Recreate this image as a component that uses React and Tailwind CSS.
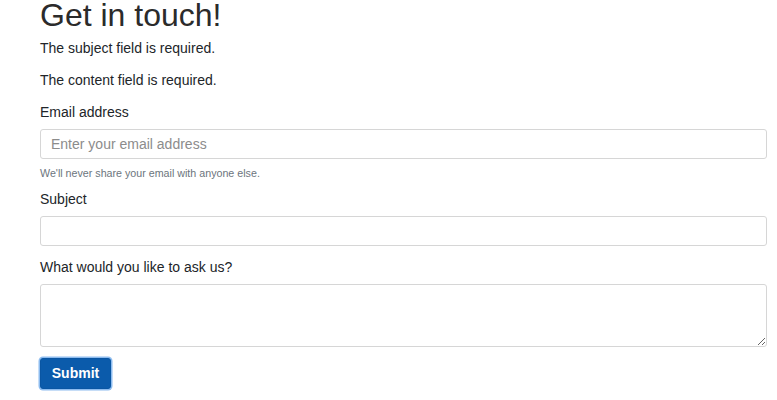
export default function App() {
  return (
    <div
      className="min-h-[400px] bg-white pl-[40px] pr-[10px] text-[#212529]"
      style={{ fontFamily: '"Liberation Sans", Arial, sans-serif' }}
    >
      <h1 className="mb-2 text-[32px] leading-[30px] font-normal text-[#2b2b2b]">
        Get in touch!
      </h1>
      <p className="mb-[11px] text-[14px] leading-[21px]">The subject field is required.</p>
      <p className="mb-[11px] text-[14px] leading-[21px]">The content field is required.</p>

      <form onSubmit={(e) => e.preventDefault()}>
        <label className="mb-[6px] block text-[14px] leading-[21px]">Email address</label>
        <input
          type="email"
          placeholder="Enter your email address"
          className="block h-[30px] w-full rounded-[3px] border border-[#d6d6d6] px-[10px] text-[14px] outline-none placeholder:text-[#8c8c8c]"
        />
        <small className="mt-[6px] block text-[10.7px] leading-[16px] text-[#6c757d]">
          We'll never share your email with anyone else.
        </small>

        <label className="mb-[6px] mt-[8px] block text-[14px] leading-[21px]">Subject</label>
        <input
          type="text"
          className="block h-[30px] w-full rounded-[3px] border border-[#d6d6d6] px-[10px] text-[14px] outline-none"
        />

        <label className="mb-[6px] mt-[11px] block text-[14px] leading-[21px]">
          What would you like to ask us?
        </label>
        <textarea className="block h-[63px] w-full rounded-[3px] border border-[#d6d6d6] px-[10px] py-[6px] text-[14px] outline-none" />

        <button
          type="submit"
          className="mt-[11px] h-[31px] w-[71px] rounded-[3px] border border-[#0a56a3] bg-[#0b5bab] text-[14px] font-bold text-white ring-[1.5px] ring-[#8dbcef]"
        >
          Submit
        </button>
      </form>
    </div>
  );
}
